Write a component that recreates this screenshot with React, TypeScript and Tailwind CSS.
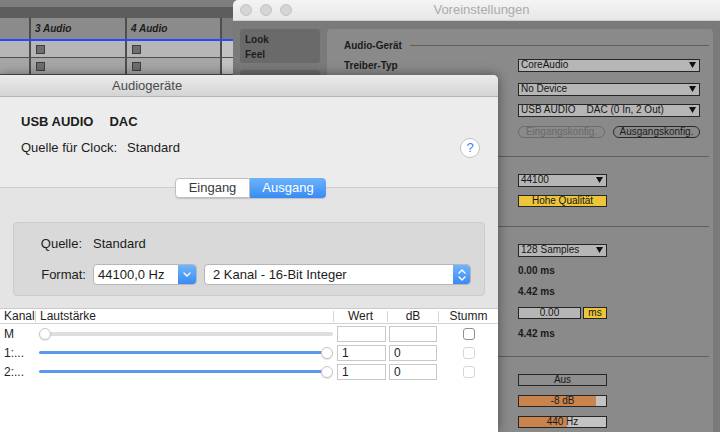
import React from 'react'

// Ableton Live arrangement strip behind both dialogs
function LiveBackground() {
  const cols = [
    { w: 'w-[29px]', label: '' },
    { w: 'w-[94px]', label: '3 Audio' },
    { w: 'w-[93px]', label: '4 Audio' },
  ]
  const Sep = () => <div className="w-[2px] bg-[#4e4e4e]" />
  return (
    <div className="flex flex-col w-[720px] h-[432px] bg-[#d6d6d6]">
      <div className="h-[7px] bg-[#7e7e7e]" />
      <div className="h-[11px] bg-[#5d5d5d]" />
      <div className="flex h-[21px] bg-[#8b8b8b]">
        {cols.map((c, i) => (
          <React.Fragment key={i}>
            <div className={`${c.w} flex items-center pl-[4px] text-[10px] font-bold italic text-[#1c1c1c]`}>{c.label}</div>
            <Sep />
          </React.Fragment>
        ))}
        <div className="flex-1 bg-[#7c7c7c]" />
      </div>
      <div className="h-[2px] bg-[#2b46ff]" />
      {['bg-[#b6b6b6]', 'bg-[#a6a6a6]'].map((bg, r) => (
        <React.Fragment key={r}>
          <div className={`flex h-[16px] ${bg}`}>
            {cols.map((c, i) => (
              <React.Fragment key={i}>
                <div className={`${c.w} flex items-center pl-[5px]`}>
                  {i > 0 && <div className="w-[9px] h-[9px] bg-[#6e6e6e] border border-[#3e3e3e]" />}
                </div>
                <Sep />
              </React.Fragment>
            ))}
            <div className="flex-1 bg-[#c2c2c2]" />
          </div>
          <div className="h-[1px] bg-[#4e4e4e]" />
        </React.Fragment>
      ))}
    </div>
  )
}

function Tri() {
  return (
    <svg width="7" height="6" viewBox="0 0 7 6">
      <path d="M0 0h7L3.5 6z" fill="#111" />
    </svg>
  )
}

function Drop({ w, text }: { w: string; text: string }) {
  return (
    <div className={`${w} h-[13px] border border-[#262626] bg-[#b6b6b6] flex items-center justify-between pl-[2px] pr-[3px] text-[10px] leading-none text-[#151515] whitespace-pre`}>
      <span>{text}</span>
      <Tri />
    </div>
  )
}

// labels left of x=497 sit under the Audiogeräte window, so only the visible one is drawn
function Row({ label, mt = 'mt-0', children }: { label?: string; mt?: string; children?: React.ReactNode }) {
  return (
    <div className={`flex h-[20px] items-center ${mt}`}>
      <div className="w-[191px] shrink-0 pl-[17px] pr-[8px] text-[10px] font-bold text-[#1a1a1a] whitespace-nowrap overflow-hidden">{label}</div>
      {children}
    </div>
  )
}

function Line({ mt }: { mt: string }) {
  return <div className={`h-[1px] bg-[#5f5f5f] ml-[13px] mr-[4px] ${mt}`} />
}

function Preferences() {
  return (
    <div className="absolute left-[233px] top-0 w-[497px] h-[432px] rounded-t-[5px] overflow-hidden bg-[#7a7a7a] flex flex-col">
      <div className="h-[21px] flex items-center bg-gradient-to-b from-[#f4f4f4] to-[#e7e7e7] border-b border-[#cfcfcf]">
        <div className="w-[80px] flex gap-[8px] pl-[7px]">
          {[0, 1, 2].map(i => (
            <div key={i} className="w-[12px] h-[12px] rounded-full bg-[#d5d5d5] border border-[#c3c3c3]" />
          ))}
        </div>
        <div className="flex-1 text-center text-[13px] text-[#ababab]">Voreinstellungen</div>
        <div className="w-[80px]" />
      </div>
      <div className="flex flex-1 pt-[8px] pl-[7px] gap-[7px]">
        <div className="w-[80px] flex flex-col gap-[7px]">
          <div className="h-[34px] rounded-[3px] bg-[#6a6a6a] pl-[5px] pt-[3px] text-[10px] font-bold leading-[15px] text-[#1e1e1e]">
            <div>Look</div>
            <div>Feel</div>
          </div>
          <div className="h-[60px] rounded-[3px] bg-[#6a6a6a]" />
        </div>
        <div className="w-[386px] rounded-t-[4px] bg-[#8a8a8a] flex flex-col pt-[6px] text-[#1a1a1a]">
          <div className="flex h-[20px] items-center pl-[17px] pr-[4px] gap-[8px]">
            <span className="text-[10px] font-bold">Audio-Gerät</span>
            <div className="flex-1 h-[1px] bg-[#5f5f5f]" />
          </div>
          <Row label="Treiber-Typ">
            <Drop w="w-[182px]" text="CoreAudio" />
          </Row>
          <Row mt="mt-[4px]">
            <Drop w="w-[182px]" text="No Device" />
          </Row>
          <Row mt="mt-[1px]">
            <Drop w="w-[182px]" text="USB AUDIO    DAC (0 In, 2 Out)" />
          </Row>
          <Row mt="mt-[2px]">
            <div className="flex gap-[8px]">
              <div className="w-[87px] h-[12px] rounded-full border border-[#6c6c6c] flex items-center justify-center text-[10px] leading-none text-[#696969]">Eingangskonfig.</div>
              <div className="w-[87px] h-[12px] rounded-full border border-[#2a2a2a] flex items-center justify-center text-[10px] leading-none text-[#1a1a1a]">Ausgangskonfig.</div>
            </div>
          </Row>
          <Line mt="mt-[14px]" />
          <Row mt="mt-[13px]">
            <Drop w="w-[89px]" text="44100" />
          </Row>
          <Row mt="mt-[1px]">
            <div className="w-[89px] h-[12px] border border-[#262626] bg-[#ecc53b] flex items-center justify-center text-[10px] leading-none text-[#151515]">Hohe Qualität</div>
          </Row>
          <Line mt="mt-[15px]" />
          <Row mt="mt-[13px]">
            <Drop w="w-[89px]" text="128 Samples" />
          </Row>
          <Row>
            <span className="text-[10px] font-bold">0.00 ms</span>
          </Row>
          <Row mt="mt-[1px]">
            <span className="text-[10px] font-bold">4.42 ms</span>
          </Row>
          <Row mt="mt-[2px]">
            <div className="flex gap-[2px]">
              <div className="w-[63px] h-[12px] border border-[#262626] bg-[#b6b6b6] flex items-center justify-center text-[10px] leading-none text-[#151515]">0.00</div>
              <div className="w-[24px] h-[12px] border border-[#262626] bg-[#ecc53b] flex items-center justify-center text-[10px] leading-none text-[#151515]">ms</div>
            </div>
          </Row>
          <Row>
            <span className="text-[10px] font-bold">4.42 ms</span>
          </Row>
          <Line mt="mt-[13px]" />
          <Row mt="mt-[13px]">
            <div className="w-[89px] h-[12px] border border-[#262626] bg-[#8e8e8e] flex items-center justify-center text-[10px] leading-none text-[#1a1a1a]">Aus</div>
          </Row>
          <Row mt="mt-[1px]">
            <div className="w-[89px] h-[12px] border border-[#262626] bg-[linear-gradient(to_right,#c9844d_89%,#c3c3c3_89%)] flex items-center justify-center text-[10px] leading-none text-[#1a1a1a]">-8 dB</div>
          </Row>
          <Row mt="mt-[1px]">
            <div className="w-[89px] h-[12px] border border-[#262626] bg-[linear-gradient(to_right,#c9844d_55%,#c3c3c3_55%)] flex items-center justify-center text-[10px] leading-none text-[#1a1a1a]">440 Hz</div>
          </Row>
        </div>
      </div>
    </div>
  )
}

function Slider({ on }: { on: boolean }) {
  return (
    <div className="relative w-[294px] h-[12px] flex items-center">
      {on ? (
        <div className="w-[284px] h-[3px] rounded-full bg-[#5c98f0]" />
      ) : (
        <div className="w-full h-[4px] rounded-full bg-[#dedede]" />
      )}
      <div className={`absolute top-0 ${on ? 'left-[282px]' : 'left-0'} w-[12px] h-[12px] rounded-full bg-white border border-[#c6c6c6] shadow-[0_1px_1px_rgba(0,0,0,0.12)]`} />
    </div>
  )
}

function Chevron({ d }: { d: string }) {
  return (
    <svg width="8" height="5" viewBox="0 0 8 5">
      <path d={d} fill="none" stroke="white" strokeWidth="1.4" strokeLinecap="round" strokeLinejoin="round" />
    </svg>
  )
}

function AudioDevices() {
  const rows = [
    { k: 'M', on: false, wert: '', db: '', dark: true },
    { k: '1:...', on: true, wert: '1', db: '0', dark: false },
    { k: '2:...', on: true, wert: '1', db: '0', dark: false },
  ]
  const HSep = () => <div className="w-[1px] h-[11px] bg-[#d6d6d6]" />
  return (
    <div className="absolute left-0 top-[75px] w-[498px] h-[357px] flex flex-col rounded-tr-[5px] overflow-hidden bg-[#ececec] shadow-[0_0_12px_rgba(0,0,0,0.45)]">
      <div className="h-[22px] shrink-0 flex items-center pl-[112px] bg-gradient-to-b from-[#ebebeb] to-[#d4d4d4] border-b border-[#b3b3b3] text-[13px] text-[#4b4b4b]">
        Audiogeräte
      </div>
      <div className="relative flex flex-col flex-1">
        <div className="h-[91px] shrink-0 border-b border-[#cdcdcd] pl-[21px] pt-[17px] text-[13px] text-[#1c1c1c]">
          <div className="flex gap-[16px] font-bold leading-[16px]">
            <span>USB AUDIO</span>
            <span>DAC</span>
          </div>
          <div className="flex items-center h-[20px] mt-[8px]">
            <span>Quelle für Clock:</span>
            <span className="ml-[10px]">Standard</span>
            <div className="ml-auto mr-[18px] w-[20px] h-[20px] rounded-full bg-white border border-[#c2c2c2] flex items-center justify-center text-[13px] text-[#3a80f0]">?</div>
          </div>
        </div>
        <div className="absolute top-[81px] left-[175px] flex h-[20px] text-[13px] rounded-[4px] shadow-[0_1px_1px_rgba(0,0,0,0.15)]">
          <div className="w-[75px] flex items-center justify-center bg-white border border-[#bfbfbf] rounded-l-[4px] text-[#3a3a3a]">Eingang</div>
          <div className="w-[76px] flex items-center justify-center bg-gradient-to-b from-[#6db3fb] to-[#388bf4] rounded-r-[4px] text-white">Ausgang</div>
        </div>
        <div className="flex flex-col flex-1 bg-[#e4e4e4]">
          <div className="px-[13px] pt-[34px]">
            <div className="h-[74px] rounded-[4px] bg-[#d9d9d9] border border-[#cbcbcb] text-[13px] text-[#1c1c1c] pt-[13px]">
              <div className="flex items-center h-[16px]">
                <div className="w-[68px] text-right">Quelle:</div>
                <div className="ml-[11px]">Standard</div>
              </div>
              <div className="flex items-center h-[21px] mt-[12px]">
                <div className="w-[72px] text-right">Format:</div>
                <div className="ml-[7px] w-[104px] h-[21px] flex bg-white border border-[#b6b6b6] rounded-[4px]">
                  <div className="flex-1 pl-[4px] flex items-center">44100,0 Hz</div>
                  <div className="w-[18px] flex items-center justify-center bg-gradient-to-b from-[#70b4fb] to-[#3a8af3] rounded-r-[3px]">
                    <Chevron d="M1 1l3 3 3-3" />
                  </div>
                </div>
                <div className="ml-[7px] w-[267px] h-[21px] flex bg-white border border-[#b6b6b6] rounded-[4px]">
                  <div className="flex-1 pl-[8px] flex items-center">2 Kanal - 16-Bit Integer</div>
                  <div className="w-[17px] flex flex-col items-center justify-center gap-[2px] bg-gradient-to-b from-[#70b4fb] to-[#3a8af3] rounded-r-[3px]">
                    <Chevron d="M1 4l3-3 3 3" />
                    <Chevron d="M1 1l3 3 3-3" />
                  </div>
                </div>
              </div>
            </div>
          </div>
          <div className="mt-[12px] flex-1 bg-white border-t border-[#cacaca] text-[12px] text-[#1e1e1e]">
            <div className="flex items-center h-[15px] leading-[14px] border-b border-[#d2d2d2]">
              <div className="w-[35px] pl-[4px]">Kanal</div>
              <HSep />
              <div className="w-[297px] pl-[4px]">Lautstärke</div>
              <HSep />
              <div className="w-[53px] text-center">Wert</div>
              <HSep />
              <div className="w-[50px] text-center">dB</div>
              <HSep />
              <div className="flex-1 text-center">Stumm</div>
            </div>
            {rows.map(r => (
              <div key={r.k} className="flex items-center h-[19px] leading-[14px]">
                <div className="w-[36px] pl-[4px]">{r.k}</div>
                <div className="w-[298px] pl-[3px]">
                  <Slider on={r.on} />
                </div>
                <div className="w-[54px] pl-[3px]">
                  <div className="w-[49px] h-[16px] border border-[#c8c8c8] pl-[4px]">{r.wert}</div>
                </div>
                <div className="w-[51px] pl-[1px]">
                  <div className="w-[48px] h-[16px] border border-[#c8c8c8] pl-[4px]">{r.db}</div>
                </div>
                <div className="flex-1 pl-[24px]">
                  <div className={`w-[12px] h-[12px] rounded-[3px] bg-white border ${r.dark ? 'border-[#8f8f8f]' : 'border-[#d6d6d6]'}`} />
                </div>
              </div>
            ))}
          </div>
        </div>
      </div>
    </div>
  )
}

export default function App() {
  return (
    <div className="relative w-[720px] h-[432px] overflow-hidden font-['Liberation_Sans',Arial,sans-serif]">
      <LiveBackground />
      <Preferences />
      <AudioDevices />
    </div>
  )
}
